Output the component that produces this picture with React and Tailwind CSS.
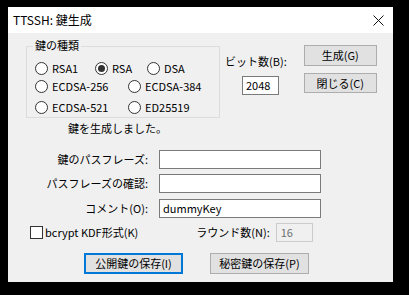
const font = { fontFamily: '"Noto Sans CJK JP", "Noto Sans", sans-serif' };

function Radio({ label, checked, w }) {
    return (
        <div className={`flex items-center ${w}`}>
            <span className="w-[13px] h-[13px] rounded-full border border-[#333] bg-white flex items-center justify-center shrink-0">
                {checked && <span className="w-[7px] h-[7px] rounded-full bg-[#333]" />}
            </span>
            <span className="ml-[4px] leading-none">{label}</span>
        </div>
    );
}

function Btn({ label, focus, w, h }) {
    return (
        <div
            className={`${w} ${h} flex items-center justify-center bg-[#e1e1e1] leading-none ${
                focus ? "border-2 border-[#0078d7]" : "border border-[#adadad]"
            }`}
        >
            {label}
        </div>
    );
}

function Field({ label, value, mt }) {
    return (
        <div className={`flex items-center ${mt}`}>
            <div className="w-[141px] text-right pr-[1px] leading-none">{label}</div>
            <div className="ml-[10px] w-[162px] h-[19px] bg-white border border-[#7a7a7a] flex items-center px-[3px] leading-none">
                {value}
            </div>
        </div>
    );
}

export default function App() {
    return (
        <div className="w-[409px] h-[295px] bg-black pt-[7px] pl-[8px]" style={font}>
            <div className="w-[385px] h-[275px] bg-[#f0f0f0] text-[11px] text-black">
                <div className="h-[26px] bg-white flex items-center justify-between pl-[5px] pr-[9px] text-[12px]">
                    <span>TTSSH: 鍵生成</span>
                    <svg width="11" height="11" viewBox="0 0 11 11">
                        <path d="M0.5 0.5 L10.5 10.5 M10.5 0.5 L0.5 10.5" stroke="#111" strokeWidth="1" />
                    </svg>
                </div>

                <div className="flex items-start">
                    <div className="relative mt-[13px] ml-[18px] w-[194px] h-[72px] border border-[#dcdcdc]">
                        <span className="absolute -top-[7px] left-[6px] px-[2px] bg-[#f0f0f0] leading-none">鍵の種類</span>
                        <div className="flex pl-[8px] mt-[15px]">
                            <Radio label="RSA1" w="w-[60px]" />
                            <Radio label="RSA" checked w="w-[52px]" />
                            <Radio label="DSA" />
                        </div>
                        <div className="flex pl-[8px] mt-[5px]">
                            <Radio label="ECDSA-256" w="w-[93px]" />
                            <Radio label="ECDSA-384" />
                        </div>
                        <div className="flex pl-[8px] mt-[8px]">
                            <Radio label="ECDSA-521" w="w-[93px]" />
                            <Radio label="ED25519" />
                        </div>
                    </div>

                    <div className="ml-[5px] mt-[23px] flex flex-col">
                        <span className="leading-none">ビット数(B):</span>
                        <div className="mt-[9px] ml-[17px] w-[37px] h-[19px] bg-white border border-[#7a7a7a] flex items-center px-[3px] leading-none">
                            2048
                        </div>
                    </div>

                    <div className="ml-[17px] mt-[12px] flex flex-col gap-[7px]">
                        <Btn label="生成(G)" w="w-[73px]" h="h-[21px]" />
                        <Btn label="閉じる(C)" w="w-[73px]" h="h-[20px]" />
                    </div>
                </div>

                <div className="ml-[60px] mt-[5px] leading-none">鍵を生成しました。</div>

                <Field label="鍵のパスフレーズ:" mt="mt-[16px]" />
                <Field label="パスフレーズの確認:" mt="mt-[5px]" />
                <Field label="コメント(O):" value="dummyKey" mt="mt-[6px]" />

                <div className="flex items-center mt-[5px]">
                    <span className="ml-[22px] w-[13px] h-[13px] border border-[#333] bg-white" />
                    <span className="ml-[2px] leading-none">bcrypt KDF形式(K)</span>
                    <span className="ml-[58px] leading-none">ラウンド数(N):</span>
                    <div className="ml-[6px] w-[37px] h-[19px] bg-[#f0f0f0] border border-[#cccccc] flex items-center px-[4px] leading-none text-[#6d6d6d]">
                        16
                    </div>
                </div>

                <div className="flex mt-[11px] ml-[76px] gap-[27px]">
                    <Btn label="公開鍵の保存(I)" focus w="w-[99px]" h="h-[21px]" />
                    <Btn label="秘密鍵の保存(P)" w="w-[99px]" h="h-[21px]" />
                </div>
            </div>
        </div>
    );
}
